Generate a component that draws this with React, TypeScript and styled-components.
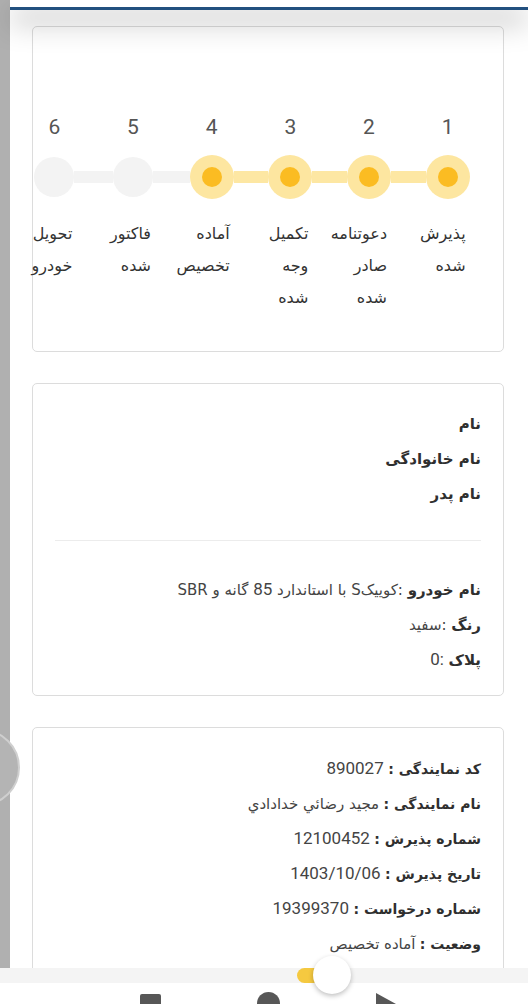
import React from "react";
import styled, { createGlobalStyle } from "styled-components";

const GlobalStyle = createGlobalStyle`
  html, body {
    margin: 0;
    padding: 0;
    background: #fff;
    font-family: "DejaVu Sans", "Noto Sans", sans-serif;
    overflow: hidden;
  }
  * { box-sizing: border-box; }
`;

const Frame = styled.div`
  display: flex;
  min-height: 1004px;
`;

const SideStrip = styled.div`
  width: 10px;
  flex-shrink: 0;
  background: #b0b0b0;
`;

const Main = styled.div`
  flex: 1;
  display: flex;
  flex-direction: column;
`;

const TopBar = styled.div`
  position: relative;
  z-index: 2;
  height: 10px;
  background: #fff;
  border-bottom: 3px solid #22507f;
  box-shadow: 0 12px 28px rgba(0, 0, 0, 0.34);
`;

const Content = styled.div`
  direction: rtl;
  display: flex;
  flex-direction: column;
  gap: 31px;
  padding: 16px 24px 0 22px;
`;

const Card = styled.div`
  background: #fff;
  border: 1px solid #dcdcdc;
  border-radius: 5px;
`;

const StepsCard = styled(Card)`
  height: 326px;
  padding-top: 88px;
`;

const StepRow = styled.div`
  display: grid;
  grid-template-columns: repeat(6, 1fr);
  margin-right: 16px;
  margin-left: -18px;
`;

const Step = styled.div`
  display: flex;
  flex-direction: column;
  align-items: center;
`;

const StepNumber = styled.div`
  font-family: Roboto, "Noto Sans", sans-serif;
  font-size: 21px;
  line-height: 24px;
  color: #555;
`;

const Track = styled.div`
  margin-top: 16px;
  width: 100%;
  height: 44px;
  display: flex;
  align-items: center;
`;

const HalfLine = styled.div<{ $show: boolean; $on: boolean }>`
  flex: 1;
  height: 12px;
  background: ${({ $show, $on }) => (!$show ? "transparent" : $on ? "#fde7a3" : "#f3f3f3")};
`;

const Dot = styled.div<{ $on: boolean }>`
  width: ${({ $on }) => ($on ? 44 : 40)}px;
  height: ${({ $on }) => ($on ? 44 : 40)}px;
  border-radius: 50%;
  background: ${({ $on }) => ($on ? "#fde6a0" : "#f3f3f3")};
  display: flex;
  align-items: center;
  justify-content: center;
  flex-shrink: 0;

  &::after {
    content: "";
    display: ${({ $on }) => ($on ? "block" : "none")};
    width: 20px;
    height: 20px;
    border-radius: 50%;
    background: #fbbc22;
  }
`;

/* narrow box, text starts at its right edge and runs out to the left */
const StepLabel = styled.div`
  margin-top: 19px;
  width: 36px;
  font-size: 16px;
  line-height: 32px;
  color: #333;
  text-align: right;
  white-space: nowrap;
`;

const InfoCard = styled(Card)<{ $pt?: number; $pb?: number }>`
  padding: ${({ $pt }) => $pt ?? 23}px 22px ${({ $pb }) => $pb ?? 20}px;
`;

const Row = styled.div<{ $size?: number }>`
  font-size: ${({ $size }) => $size ?? 15}px;
  line-height: 35px;
  height: 35px;
  color: #444;
  white-space: nowrap;
`;

const Label = styled.span`
  font-weight: bold;
  color: #2f2f2f;
`;

const Value = styled.span`
  font-size: 15px;
  line-height: 1;
`;

const Digits = styled.span`
  font-family: Roboto, "DejaVu Sans", sans-serif;
  font-size: 17px;
  line-height: 1;
`;

const Divider = styled.hr`
  border: none;
  border-top: 1px solid #ececec;
  margin: 28px 0 32px;
`;

const BottomBar = styled.div`
  position: fixed;
  left: 0;
  right: 0;
  bottom: 0;
  height: 36px;
  background: #fff;
  z-index: 5;

  &::before {
    content: "";
    position: absolute;
    left: 0;
    right: 0;
    top: 0;
    height: 15px;
    background: #f4f4f4;
  }
`;

const NavIcons = styled.div`
  position: absolute;
  left: 0;
  right: 0;
  top: 24px;
  height: 12px;
  overflow: hidden;
  display: flex;
  justify-content: center;
  gap: 96px;
  padding-left: 8px;
`;

const NavSquare = styled.div`
  width: 21px;
  height: 21px;
  margin-top: 2px;
  border-radius: 2px;
  background: #575757;
`;

const NavCircle = styled.div`
  width: 23px;
  height: 23px;
  border-radius: 50%;
  background: #575757;
`;

const NavBack = styled.div`
  width: 0;
  height: 0;
  margin-top: 1px;
  border-top: 11px solid transparent;
  border-bottom: 11px solid transparent;
  border-left: 20px solid #575757;
`;

const ToggleTail = styled.div`
  position: absolute;
  left: 297px;
  top: 0;
  width: 18px;
  height: 15px;
  border-radius: 8px 0 0 8px;
  background: #f5c940;
`;

const ToggleKnob = styled.div`
  position: absolute;
  left: 313px;
  top: -12px;
  width: 38px;
  height: 38px;
  border-radius: 50%;
  background: #fff;
  box-shadow: 0 2px 5px rgba(0, 0, 0, 0.25);
`;

const FloatButton = styled.div`
  position: fixed;
  left: -57px;
  top: 729px;
  width: 77px;
  height: 77px;
  border-radius: 50%;
  background: #b4b4b4;
  border: 2px solid #cfcfcf;
  z-index: 4;
`;

const steps = [
  { n: 1, lines: ["پذیرش", "شده"], on: true },
  { n: 2, lines: ["دعوتنامه", "صادر", "شده"], on: true },
  { n: 3, lines: ["تکمیل", "وجه", "شده"], on: true },
  { n: 4, lines: ["آماده", "تخصیص"], on: true },
  { n: 5, lines: ["فاکتور", "شده"], on: false },
  { n: 6, lines: ["تحویل", "خودرو"], on: false },
];

const agency = [
  { label: "کد نمایندگی :", value: "890027", digits: true },
  { label: "نام نمایندگی :", value: "مجيد رضائي خدادادي", digits: false },
  { label: "شماره پذیرش :", value: "12100452", digits: true },
  { label: "تاریخ پذیرش :", value: "1403/10/06", digits: true },
  { label: "شماره درخواست :", value: "19399370", digits: true },
  { label: "وضعیت :", value: "آماده تخصیص", digits: false },
];

const App: React.FC = () => {
  return (
    <>
      <GlobalStyle />
      <Frame>
        <SideStrip />
        <Main>
          <TopBar />
          <Content>
            <StepsCard>
              <StepRow>
                {steps.map((s, i) => {
                  const next = steps[i + 1];
                  return (
                    <Step key={s.n}>
                      <StepNumber>{s.n}</StepNumber>
                      <Track>
                        <HalfLine $show={i > 0} $on={s.on} />
                        <Dot $on={s.on} />
                        <HalfLine $show={!!next} $on={!!next && next.on} />
                      </Track>
                      <StepLabel>
                        {s.lines.map((l, j) => (
                          <div key={j}>{l}</div>
                        ))}
                      </StepLabel>
                    </Step>
                  );
                })}
              </StepRow>
            </StepsCard>

            <InfoCard $pb={17}>
              <Row><Label>نام</Label></Row>
              <Row><Label>نام خانوادگی</Label></Row>
              <Row><Label>نام پدر</Label></Row>
              <Divider />
              <Row>
                <Label>نام خودرو</Label> :کوییکS با استاندارد <Digits>85</Digits> گانه و SBR
              </Row>
              <Row>
                <Label>رنگ</Label> :سفید
              </Row>
              <Row>
                <Label>پلاک</Label> <Digits>:0</Digits>
              </Row>
            </InfoCard>

            <InfoCard $pt={24} $pb={60}>
              {agency.map((a) => (
                <Row key={a.label} $size={14}>
                  <Label>{a.label}</Label>{" "}
                  {a.digits ? <Digits>{a.value}</Digits> : <Value>{a.value}</Value>}
                </Row>
              ))}
            </InfoCard>
          </Content>
        </Main>
      </Frame>
      <FloatButton />
      <BottomBar>
        <ToggleTail />
        <ToggleKnob />
        <NavIcons>
          <NavSquare />
          <NavCircle />
          <NavBack />
        </NavIcons>
      </BottomBar>
    </>
  );
};

export default App;
